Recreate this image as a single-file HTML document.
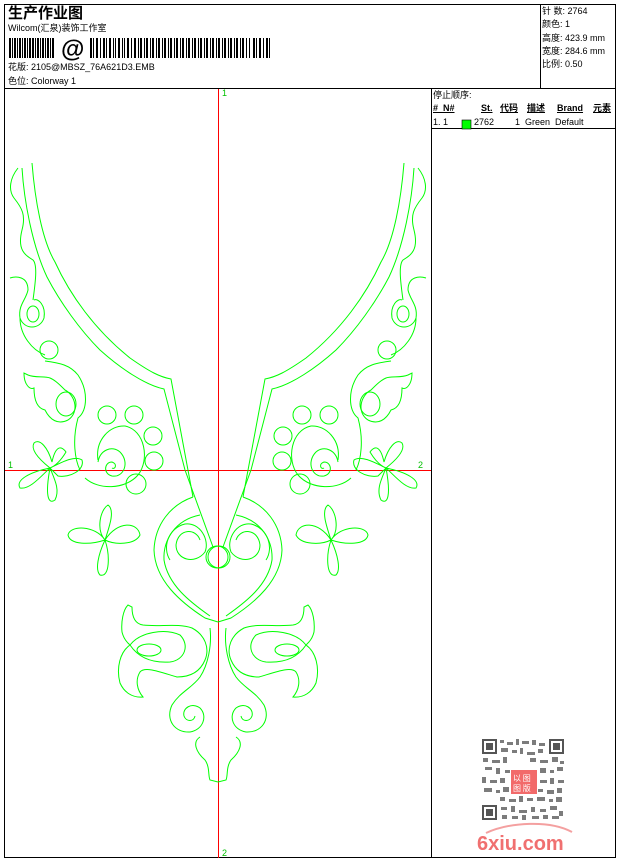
<!DOCTYPE html>
<html><head><meta charset="utf-8"><style>
html,body{margin:0;padding:0;background:#fff;}
body{width:620px;height:860px;position:relative;overflow:hidden;font-family:"Liberation Sans","Noto Sans CJK SC",sans-serif;color:#000;}
.t{position:absolute;white-space:nowrap;font-size:9px;line-height:11px;}
</style></head><body>
<svg width="620" height="860" style="position:absolute;left:0;top:0" xmlns="http://www.w3.org/2000/svg">
<rect x="4.5" y="4.5" width="611" height="853" fill="none" stroke="#000"/>
<line x1="4" y1="88.5" x2="616" y2="88.5" stroke="#000"/>
<line x1="540.5" y1="4" x2="540.5" y2="88" stroke="#000"/>
<line x1="431.5" y1="88" x2="431.5" y2="858" stroke="#000"/>
<line x1="431" y1="128.5" x2="616" y2="128.5" stroke="#000"/>
<g fill="#000">
<rect x="9" y="38" width="2" height="20"/><rect x="12" y="38" width="1" height="20"/><rect x="14" y="38" width="2" height="20"/><rect x="17" y="38" width="1" height="20"/><rect x="19" y="38" width="2" height="20"/><rect x="22" y="38" width="1" height="20"/><rect x="24" y="38" width="2" height="20"/><rect x="27" y="38" width="1" height="20"/><rect x="29" y="38" width="2" height="20"/><rect x="32" y="38" width="2" height="20"/><rect x="35" y="38" width="1" height="20"/><rect x="37" y="38" width="2" height="20"/><rect x="40" y="38" width="1" height="20"/><rect x="42" y="38" width="2" height="20"/><rect x="45" y="38" width="1" height="20"/><rect x="47" y="38" width="2" height="20"/><rect x="50" y="38" width="1" height="20"/><rect x="52" y="38" width="2" height="20"/>
</g>
<text x="61" y="57" font-family="Liberation Sans" font-size="24" font-weight="bold">@</text>
<g fill="#000">
<rect x="90" y="38" width="2" height="20"/><rect x="93" y="38" width="1" height="20"/><rect x="96" y="38" width="2" height="20"/><rect x="100" y="38" width="1" height="20"/><rect x="103" y="38" width="2" height="20"/><rect x="106" y="38" width="1" height="20"/><rect x="109" y="38" width="2" height="20"/><rect x="113" y="38" width="1" height="20"/><rect x="115" y="38" width="1" height="20"/><rect x="118" y="38" width="2" height="20"/><rect x="122" y="38" width="1" height="20"/><rect x="124" y="38" width="1" height="20"/><rect x="127" y="38" width="2" height="20"/><rect x="131" y="38" width="1" height="20"/><rect x="134" y="38" width="2" height="20"/><rect x="138" y="38" width="1" height="20"/><rect x="140" y="38" width="2" height="20"/><rect x="144" y="38" width="1" height="20"/><rect x="146" y="38" width="2" height="20"/><rect x="150" y="38" width="1" height="20"/><rect x="152" y="38" width="2" height="20"/><rect x="156" y="38" width="1" height="20"/><rect x="158" y="38" width="2" height="20"/><rect x="162" y="38" width="1" height="20"/><rect x="164" y="38" width="2" height="20"/><rect x="168" y="38" width="1" height="20"/><rect x="170" y="38" width="2" height="20"/><rect x="174" y="38" width="1" height="20"/><rect x="176" y="38" width="2" height="20"/><rect x="180" y="38" width="1" height="20"/><rect x="182" y="38" width="2" height="20"/><rect x="186" y="38" width="1" height="20"/><rect x="188" y="38" width="2" height="20"/><rect x="192" y="38" width="1" height="20"/><rect x="194" y="38" width="2" height="20"/><rect x="198" y="38" width="1" height="20"/><rect x="200" y="38" width="2" height="20"/><rect x="204" y="38" width="1" height="20"/><rect x="206" y="38" width="2" height="20"/><rect x="210" y="38" width="1" height="20"/><rect x="212" y="38" width="2" height="20"/><rect x="216" y="38" width="1" height="20"/><rect x="218" y="38" width="2" height="20"/><rect x="222" y="38" width="1" height="20"/><rect x="224" y="38" width="2" height="20"/><rect x="228" y="38" width="1" height="20"/><rect x="230" y="38" width="2" height="20"/><rect x="234" y="38" width="1" height="20"/><rect x="236" y="38" width="2" height="20"/><rect x="240" y="38" width="1" height="20"/><rect x="242" y="38" width="2" height="20"/><rect x="246" y="38" width="1" height="20"/><rect x="249" y="38" width="1" height="20"/><rect x="253" y="38" width="2" height="20"/><rect x="256" y="38" width="1" height="20"/><rect x="259" y="38" width="2" height="20"/><rect x="263" y="38" width="1" height="20"/><rect x="266" y="38" width="2" height="20"/><rect x="269" y="38" width="1" height="20"/>
</g>
<line x1="218.5" y1="89" x2="218.5" y2="858" stroke="#f00"/>
<line x1="5" y1="470.5" x2="431" y2="470.5" stroke="#f00"/>
<g font-family="Liberation Sans" font-size="9" fill="#00c000">
<text x="222" y="96">1</text><text x="222" y="856">2</text><text x="8" y="468">1</text><text x="418" y="468">2</text>
</g>
<g id="half" fill="none" stroke="#00ff00" stroke-width="1">
<path d="M32,163 C35,200 42,240 55,262 C70,295 95,330 130,358 C150,372 160,377 171,379 L193,497"/>
<path d="M22,168 C24,200 32,245 47,277 C60,302 80,330 100,350 C120,368 145,385 164,389 L185,470 L213,547"/>
<path d="M193,497 C170,505 155,525 154,550 C155,580 180,602 205,618 L218,622"/>
<path d="M200,515 C175,520 163,540 164,560 C168,585 190,602 210,616"/>
<path d="M200,540 C196,528 178,528 176,545 C176,560 195,565 205,552 C210,540 200,522 185,524 C168,528 162,548 170,560"/>
<circle cx="217" cy="557" r="11"/>
<path d="M18,168 C10,178 8,190 14,198 C22,208 26,215 22,230 C17,250 25,255 33,260 C38,265 35,285 33,300"/>
<path d="M10,278 C16,276 28,276 28,290 C26,300 18,305 20,318 C24,330 40,330 44,318 C46,305 38,298 34,300"/>
<ellipse cx="33" cy="314" rx="6" ry="8"/>
<path d="M20,318 C20,335 32,350 45,355"/>
<circle cx="49" cy="350" r="9"/>
<path d="M45,361 C60,363 70,365 78,375 C88,390 88,410 78,418 C72,440 75,460 80,470"/>
<path d="M24,373 C24,385 30,390 34,388 C34,398 36,408 45,410 C50,420 58,425 68,420 C80,412 75,395 65,390 C60,385 55,380 50,378 C45,376 35,378 28,375 Z"/>
<ellipse cx="66" cy="404" rx="10" ry="12"/>
<circle cx="107" cy="415" r="9"/>
<circle cx="134" cy="415" r="9"/>
<circle cx="153" cy="436" r="9"/>
<circle cx="154" cy="461" r="9"/>
<circle cx="136" cy="484" r="10"/>
<path d="M98,460 C95,440 110,425 125,426 C145,430 150,460 138,475 C125,490 98,490 85,478"/>
<path d="M98,462 C100,450 112,445 120,452 C130,462 124,478 112,476 C103,474 104,462 112,462 C118,464 115,470 112,468"/>
<path d="M50,468 C40,460 30,450 34,443 C40,438 48,448 52,462 C55,448 60,444 66,452 C60,462 55,466 50,468 C62,462 75,455 82,460 C85,470 70,478 58,476 C52,470 50,468 50,468 C42,475 30,490 20,488 C15,480 30,472 50,468 C55,480 60,490 55,500 C48,505 45,495 50,468 Z"/>
<path d="M108,505 C100,510 96,530 105,540 C90,545 70,545 68,535 C70,525 95,525 105,540 C115,545 135,545 140,535 C138,522 118,520 105,540 C98,555 95,570 100,575 C110,578 110,555 105,540 C110,525 115,510 108,505 Z"/>
<path d="M128,605 C123,610 121,622 122,632 C124,640 128,643 130,645 C120,652 116,668 120,683 C124,692 132,698 143,697 C137,690 135,680 140,672 C145,666 160,672 177,677 C190,677 200,672 205,660 C210,648 205,635 192,628 C178,623 160,627 143,625 C136,624 132,618 132,607 Z"/>
<path d="M130,645 C140,632 165,628 180,635 C190,645 185,660 170,662 C155,663 140,660 130,645 Z"/>
<ellipse cx="149" cy="650" rx="12" ry="6"/>
<path d="M210,628 C212,645 208,665 200,677 C192,688 180,692 172,705 C165,720 175,733 190,732 C203,730 208,716 200,708 C192,702 182,708 184,716 C186,722 194,722 195,716"/>
<path d="M200,737 C192,742 196,752 205,760 C210,767 208,776 210,780 L218,782"/>
</g>
<use href="#half" transform="translate(436,0) scale(-1,1)"/>
<rect x="462" y="120" width="9" height="9" fill="#00ff00" stroke="#000" stroke-width="0.6"/>
<g fill="#555">
<rect x="482" y="739" width="15" height="15"/><rect x="549" y="739" width="15" height="15"/><rect x="482" y="805" width="15" height="15"/>
</g>
<g fill="#fff"><rect x="484" y="741" width="11" height="11"/><rect x="551" y="741" width="11" height="11"/><rect x="484" y="807" width="11" height="11"/></g>
<g fill="#555"><rect x="486" y="743" width="7" height="7"/><rect x="553" y="743" width="7" height="7"/><rect x="486" y="809" width="7" height="7"/></g>
<g fill="#666" opacity="0.85">
<rect x="500" y="740" width="4" height="3"/><rect x="507" y="742" width="6" height="3"/><rect x="516" y="739" width="3" height="6"/><rect x="522" y="741" width="7" height="3"/><rect x="532" y="740" width="4" height="5"/><rect x="539" y="743" width="6" height="3"/>
<rect x="501" y="748" width="7" height="4"/><rect x="512" y="750" width="5" height="3"/><rect x="520" y="748" width="3" height="6"/><rect x="527" y="752" width="8" height="3"/><rect x="538" y="749" width="5" height="4"/>
<rect x="483" y="758" width="5" height="4"/><rect x="492" y="760" width="8" height="3"/><rect x="503" y="757" width="4" height="6"/><rect x="530" y="758" width="6" height="4"/><rect x="540" y="760" width="8" height="3"/><rect x="552" y="757" width="6" height="5"/><rect x="560" y="761" width="4" height="3"/>
<rect x="485" y="767" width="7" height="3"/><rect x="496" y="768" width="4" height="6"/><rect x="505" y="770" width="5" height="3"/><rect x="540" y="768" width="6" height="5"/><rect x="550" y="770" width="4" height="3"/><rect x="557" y="767" width="6" height="4"/>
<rect x="482" y="777" width="4" height="6"/><rect x="490" y="780" width="7" height="3"/><rect x="500" y="778" width="5" height="5"/><rect x="540" y="780" width="7" height="3"/><rect x="550" y="778" width="4" height="6"/><rect x="558" y="780" width="6" height="3"/>
<rect x="484" y="788" width="8" height="4"/><rect x="496" y="790" width="4" height="3"/><rect x="503" y="787" width="6" height="5"/><rect x="538" y="789" width="5" height="3"/><rect x="547" y="790" width="7" height="4"/><rect x="557" y="788" width="5" height="5"/>
<rect x="500" y="797" width="5" height="4"/><rect x="509" y="799" width="7" height="3"/><rect x="519" y="796" width="4" height="6"/><rect x="527" y="798" width="6" height="3"/><rect x="537" y="797" width="8" height="4"/><rect x="549" y="799" width="4" height="3"/><rect x="556" y="797" width="6" height="5"/>
<rect x="501" y="807" width="6" height="3"/><rect x="511" y="806" width="4" height="6"/><rect x="519" y="810" width="8" height="3"/><rect x="531" y="807" width="4" height="5"/><rect x="540" y="809" width="6" height="3"/><rect x="550" y="806" width="7" height="4"/><rect x="559" y="811" width="4" height="5"/>
<rect x="502" y="815" width="5" height="4"/><rect x="512" y="816" width="6" height="3"/><rect x="522" y="815" width="4" height="5"/><rect x="532" y="816" width="7" height="3"/><rect x="543" y="815" width="5" height="4"/><rect x="552" y="816" width="7" height="3"/>
</g>
<rect x="511" y="770" width="26" height="24" fill="#f26a6a"/>
<text x="513" y="781" font-size="8" fill="#fff" font-family="Noto Sans CJK SC">以 图</text>
<text x="513" y="791" font-size="8" fill="#fff" font-family="Noto Sans CJK SC">图 版</text>
<path d="M486,833 C510,822 550,820 572,832" fill="none" stroke="#f4a0a0" stroke-width="2"/>
<text x="477" y="850" font-family="Liberation Sans" font-size="20" font-weight="bold" fill="#f07070">6xiu.com</text>
</svg>
<div class="t" style="left:8px;top:4px;font-size:15px;line-height:17px;font-weight:bold;font-family:'Noto Sans CJK SC',sans-serif">生产作业图</div>
<div class="t" style="left:8px;top:23px">Wilcom(汇泉)装饰工作室</div>
<div class="t" style="left:8px;top:62px">花版: 2105@MBSZ_76A621D3.EMB</div>
<div class="t" style="left:8px;top:76px">色位: Colorway 1</div>
<div class="t" style="left:542px;top:5px;line-height:13.3px">针 数: 2764<br>颜色: 1<br>高度: 423.9 mm<br>宽度: 284.6 mm<br>比例: 0.50</div>
<div class="t" style="left:433px;top:90px">停止顺序:</div>
<div class="t" style="left:433px;top:103px;font-weight:bold;text-decoration:underline">#&nbsp;&nbsp;N#</div>
<div class="t" style="left:481px;top:103px;font-weight:bold;text-decoration:underline">St.</div>
<div class="t" style="left:500px;top:103px;font-weight:bold;text-decoration:underline">代码</div>
<div class="t" style="left:527px;top:103px;font-weight:bold;text-decoration:underline">描述</div>
<div class="t" style="left:557px;top:103px;font-weight:bold;text-decoration:underline">Brand</div>
<div class="t" style="left:593px;top:103px;font-weight:bold;text-decoration:underline">元素</div>
<div class="t" style="left:433px;top:117px">1. 1</div>
<div class="t" style="left:474px;top:117px">2762</div>
<div class="t" style="left:515px;top:117px">1&nbsp; Green&nbsp; Default</div>
</body></html>
